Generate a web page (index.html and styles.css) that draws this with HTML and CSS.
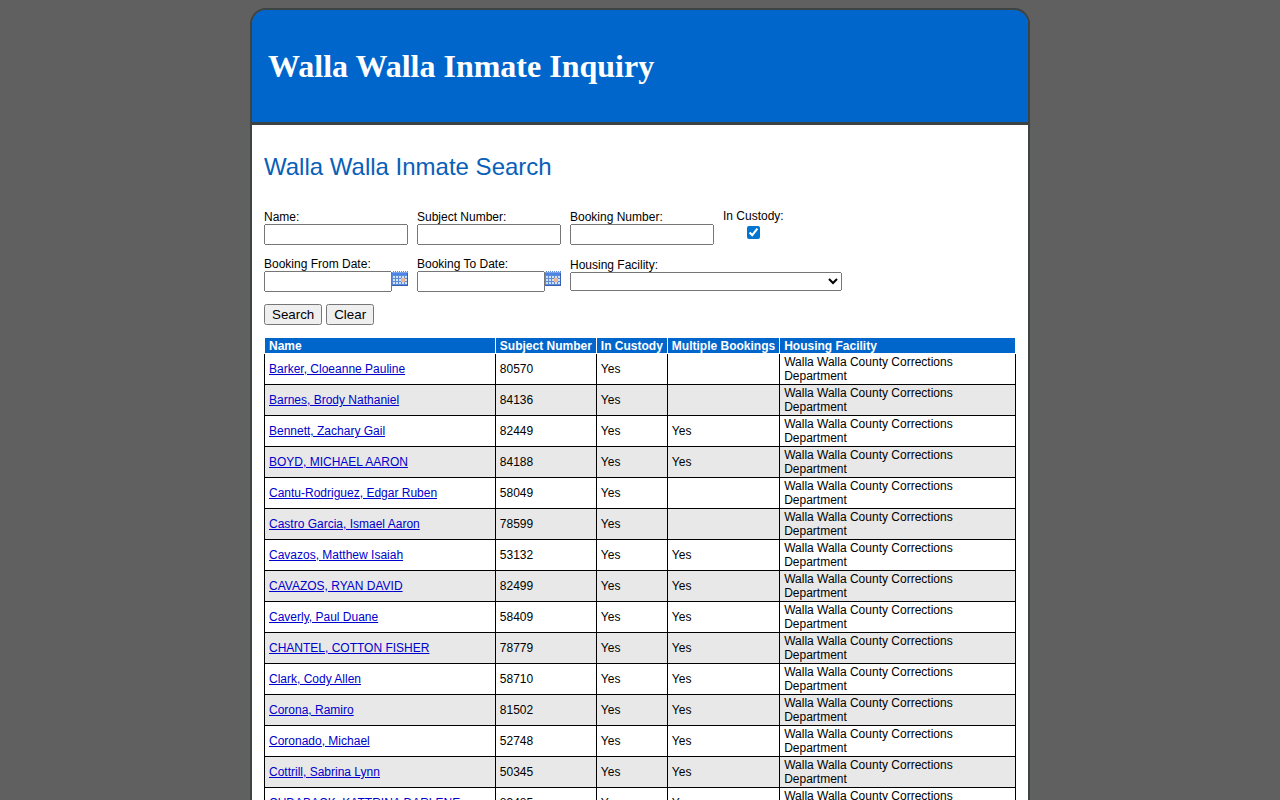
FILE: index.html
```html
<!DOCTYPE html>
<html lang="en">
<head>
    <meta charset="UTF-8">
    <meta name="viewport" content="width=device-width, initial-scale=1.0">
    <title>Walla Walla Inmate Inquiry</title>
    <link rel="stylesheet" href="styles.css">
</head>
<body>
    <!-- calendar glyph shared by both date pickers -->
    <svg class="sprite" aria-hidden="true">
        <symbol id="calendar" viewBox="0 0 16 15">
            <rect width="16" height="15" fill="#5f8ad6"/>
            <path d="M0 0h1v1H0zM2 0h1v1H2zM4 0h1v1H4zM6 0h1v1H6zM8 0h1v1H8zM10 0h1v1h-1zM12 0h1v1h-1zM14 0h1v1h-1z" fill="#ffffff"/>
            <rect y="1" width="16" height="1" fill="#7ba3e6"/>
            <rect x="0" y="2" width="16" height="2" fill="#4b86e6"/>
            <path d="M1 5h2v2H1zM4 5h2v2H4zM7 5h2v2H7zM10 5h2v2h-2zM13 5h2v2h-2zM1 8h2v2H1zM4 8h2v2H4zM7 8h2v2H7zM13 8h2v2h-2zM1 11h2v2H1zM4 11h2v2H4zM7 11h2v2H7zM10 11h2v2h-2zM13 11h2v2h-2z" fill="#cfe2fb"/>
            <rect x="9" y="7" width="4" height="4" fill="#e6b596"/>
            <path d="M0 14h16v1H0zM15 2h1v12h-1z" fill="#3560b4"/>
        </symbol>
    </svg>

    <div class="page">
        <header class="header">
            <h1>Walla Walla Inmate Inquiry</h1>
        </header>
        <main class="main">
            <h2>Walla Walla Inmate Search</h2>
            <form class="search">
                <div class="fields">
                    <div class="field">
                        <label for="name">Name:</label>
                        <input type="text" id="name">
                    </div>
                    <div class="field">
                        <label for="subjectNumber">Subject Number:</label>
                        <input type="text" id="subjectNumber">
                    </div>
                    <div class="field">
                        <label for="bookingNumber">Booking Number:</label>
                        <input type="text" id="bookingNumber">
                    </div>
                    <div class="field custody">
                        <label for="inCustody">In Custody:</label>
                        <input type="checkbox" id="inCustody" checked>
                    </div>
                    <div class="field">
                        <label for="fromDate">Booking From Date:</label>
                        <div class="date">
                            <input type="text" id="fromDate">
                            <button type="button" class="picker" aria-label="Pick from date"><svg><use href="#calendar"/></svg></button>
                        </div>
                    </div>
                    <div class="field">
                        <label for="toDate">Booking To Date:</label>
                        <div class="date">
                            <input type="text" id="toDate">
                            <button type="button" class="picker" aria-label="Pick to date"><svg><use href="#calendar"/></svg></button>
                        </div>
                    </div>
                    <div class="field facility">
                        <label for="facility">Housing Facility:</label>
                        <select id="facility"><option></option></select>
                    </div>
                </div>
                <div class="buttons">
                    <button type="submit">Search</button>
                    <button type="reset">Clear</button>
                </div>
            </form>
            <table class="results">
                <thead>
                    <tr>
                        <th class="col-name">Name</th>
                        <th>Subject Number</th>
                        <th>In Custody</th>
                        <th>Multiple Bookings</th>
                        <th class="col-facility">Housing Facility</th>
                    </tr>
                </thead>
                <tbody>
                    <tr><td><a href="#">Barker, Cloeanne Pauline</a></td><td>80570</td><td>Yes</td><td></td><td>Walla Walla County Corrections Department</td></tr>
                    <tr><td><a href="#">Barnes, Brody Nathaniel</a></td><td>84136</td><td>Yes</td><td></td><td>Walla Walla County Corrections Department</td></tr>
                    <tr><td><a href="#">Bennett, Zachary Gail</a></td><td>82449</td><td>Yes</td><td>Yes</td><td>Walla Walla County Corrections Department</td></tr>
                    <tr><td><a href="#">BOYD, MICHAEL AARON</a></td><td>84188</td><td>Yes</td><td>Yes</td><td>Walla Walla County Corrections Department</td></tr>
                    <tr><td><a href="#">Cantu-Rodriguez, Edgar Ruben</a></td><td>58049</td><td>Yes</td><td></td><td>Walla Walla County Corrections Department</td></tr>
                    <tr><td><a href="#">Castro Garcia, Ismael Aaron</a></td><td>78599</td><td>Yes</td><td></td><td>Walla Walla County Corrections Department</td></tr>
                    <tr><td><a href="#">Cavazos, Matthew Isaiah</a></td><td>53132</td><td>Yes</td><td>Yes</td><td>Walla Walla County Corrections Department</td></tr>
                    <tr><td><a href="#">CAVAZOS, RYAN DAVID</a></td><td>82499</td><td>Yes</td><td>Yes</td><td>Walla Walla County Corrections Department</td></tr>
                    <tr><td><a href="#">Caverly, Paul Duane</a></td><td>58409</td><td>Yes</td><td>Yes</td><td>Walla Walla County Corrections Department</td></tr>
                    <tr><td><a href="#">CHANTEL, COTTON FISHER</a></td><td>78779</td><td>Yes</td><td>Yes</td><td>Walla Walla County Corrections Department</td></tr>
                    <tr><td><a href="#">Clark, Cody Allen</a></td><td>58710</td><td>Yes</td><td>Yes</td><td>Walla Walla County Corrections Department</td></tr>
                    <tr><td><a href="#">Corona, Ramiro</a></td><td>81502</td><td>Yes</td><td>Yes</td><td>Walla Walla County Corrections Department</td></tr>
                    <tr><td><a href="#">Coronado, Michael</a></td><td>52748</td><td>Yes</td><td>Yes</td><td>Walla Walla County Corrections Department</td></tr>
                    <tr><td><a href="#">Cottrill, Sabrina Lynn</a></td><td>50345</td><td>Yes</td><td>Yes</td><td>Walla Walla County Corrections Department</td></tr>
                    <tr><td><a href="#">CUDABACK, KATTRINA DARLENE</a></td><td>83485</td><td>Yes</td><td>Yes</td><td>Walla Walla County Corrections Department</td></tr>
                </tbody>
            </table>
        </main>
    </div>
</body>
</html>
```
FILE: styles.css
```css
body {
    margin: 8px;
    background-color: #606060;
    font-family: "Liberation Sans", Arial, sans-serif;
    font-size: 12px;
    line-height: 14px;
    color: #000;
}
.sprite {
    display: none;
}
.page {
    box-sizing: border-box;
    max-width: 780px;
    margin: 0 auto;
    border: 2px solid #3d4242;
    border-radius: 16px 16px 0 0;
    overflow: hidden;
}
.header {
    padding: 36px 16px;
    background-color: #0066cc;
    border-bottom: 3px solid #3d4242;
}
.header h1 {
    margin: 0;
    font-family: "Liberation Serif", "Times New Roman", serif;
    font-size: 32px;
    line-height: 40px;
    color: white;
}
.main {
    padding: 28px 12px;
    background-color: white;
}
.main h2 {
    margin: 0 0 28px;
    font-size: 24px;
    line-height: 28px;
    font-weight: normal;
    color: #0860b8;
}
.fields {
    display: grid;
    grid-template-columns: repeat(3, 144px) auto;
    justify-content: start;
    align-items: center;
    gap: 11px 9px;
}
.field {
    display: flex;
    flex-direction: column;
}
.field input[type="text"] {
    box-sizing: border-box;
    width: 100%;
    height: 21px;
}
.custody {
    justify-self: start;
    align-items: center;
}
.custody input {
    margin: 3px 3px 7px;
    accent-color: #0075d2;
}
.date {
    display: flex;
    align-items: flex-start;
}
.picker {
    padding: 0;
    border: 0;
    background: none;
    cursor: pointer;
}
.picker svg {
    display: block;
    width: 16px;
    height: 15px;
}
.facility {
    grid-column: 3 / -1;
}
.facility select {
    width: 272px;
    height: 19px;
}
.buttons {
    display: flex;
    gap: 4px;
    margin: 12px 0;
}
.results {
    width: 100%;
    border-collapse: collapse;
}
.results th,
.results td {
    padding: 1px 4px;
    border: 1px solid black;
    text-align: left;
}
.results th {
    padding-bottom: 0;
    background-color: #0066cc;
    border-color: white;
    color: white;
    white-space: nowrap;
}
.results tbody tr:nth-child(even) {
    background-color: #e8e8e8;
}
.col-name {
    width: 222px;
}
.col-facility {
    width: 227px;
}
.results a {
    color: #0000cc;
}
```
